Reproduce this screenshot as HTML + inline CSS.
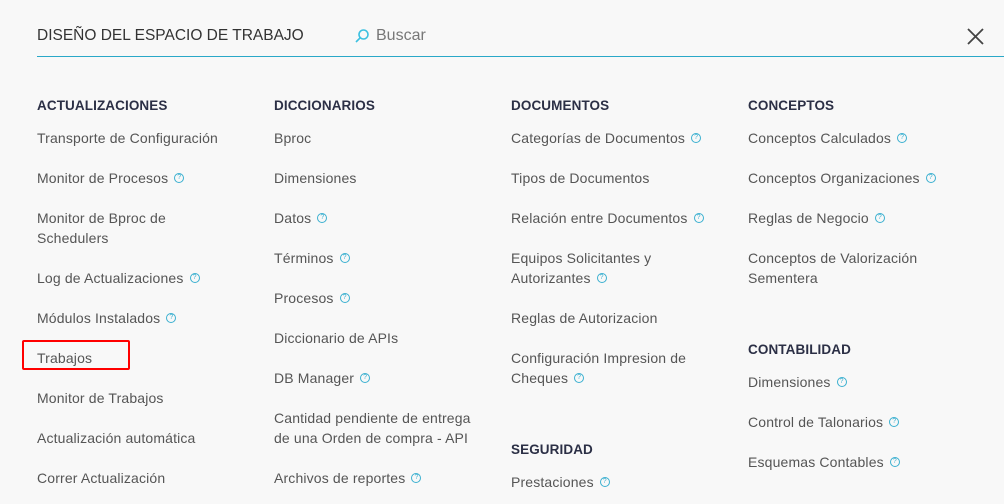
<!DOCTYPE html>
<html><head><meta charset="utf-8"><style>
body{margin:0;width:1004px;height:504px;background:#f8f8f8;position:relative;overflow:hidden;font-family:"Liberation Sans",sans-serif;}
.t{position:absolute;font-size:14px;line-height:20px;color:#555;white-space:nowrap;letter-spacing:0.15px}
.h{position:absolute;font-size:13.5px;line-height:20px;color:#2b2f45;font-weight:bold;white-space:nowrap;letter-spacing:0.1px}
.q{display:inline-block;box-sizing:border-box;width:10px;height:10px;border:1.2px solid #3bb0d0;border-radius:50%;color:#3bb0d0;font-size:7px;line-height:8px;text-align:center;margin-left:6px;vertical-align:middle;position:relative;top:-1px;letter-spacing:0}
</style></head><body>
<div style="position:absolute;left:37px;top:26px;font-size:15.5px;line-height:20px;color:#333;">DISEÑO DEL ESPACIO DE TRABAJO</div>
<svg style="position:absolute;left:354px;top:28px" width="16" height="16" viewBox="0 0 16 16"><circle cx="9.5" cy="6.5" r="4.5" fill="none" stroke="#3bc0e0" stroke-width="1.6"/><line x1="6.3" y1="9.7" x2="2" y2="14" stroke="#3bc0e0" stroke-width="1.6"/></svg>
<div style="position:absolute;left:376px;top:26px;font-size:16px;line-height:20px;color:#777">Buscar</div>
<svg style="position:absolute;left:967px;top:28px" width="17" height="17" viewBox="0 0 17 17"><path d="M1 1L16 16M16 1L1 16" stroke="#444" stroke-width="1.8"/></svg>
<div style="position:absolute;left:37px;top:56px;width:967px;height:1px;background:#2aa8c8"></div>

<div class="h" style="left:37px;top:96px">ACTUALIZACIONES</div>
<div class="t" style="left:37px;top:128px">Transporte de Configuración</div>
<div class="t" style="left:37px;top:168px">Monitor de Procesos<span class="q">?</span></div>
<div class="t" style="left:37px;top:208px">Monitor de Bproc de<br>Schedulers</div>
<div class="t" style="left:37px;top:268px">Log de Actualizaciones<span class="q">?</span></div>
<div class="t" style="left:37px;top:308px">Módulos Instalados<span class="q">?</span></div>
<div class="t" style="left:37px;top:348px">Trabajos</div>
<div style="position:absolute;left:22px;top:340px;width:104px;height:26px;border:2px solid #f00;border-radius:2px"></div>
<div class="t" style="left:37px;top:388px">Monitor de Trabajos</div>
<div class="t" style="left:37px;top:428px">Actualización automática</div>
<div class="t" style="left:37px;top:468px">Correr Actualización</div>

<div class="h" style="left:274px;top:96px">DICCIONARIOS</div>
<div class="t" style="left:274px;top:128px">Bproc</div>
<div class="t" style="left:274px;top:168px">Dimensiones</div>
<div class="t" style="left:274px;top:208px">Datos<span class="q">?</span></div>
<div class="t" style="left:274px;top:248px">Términos<span class="q">?</span></div>
<div class="t" style="left:274px;top:288px">Procesos<span class="q">?</span></div>
<div class="t" style="left:274px;top:328px">Diccionario de APIs</div>
<div class="t" style="left:274px;top:368px">DB Manager<span class="q">?</span></div>
<div class="t" style="left:274px;top:408px">Cantidad pendiente de entrega<br>de una Orden de compra - API</div>
<div class="t" style="left:274px;top:468px">Archivos de reportes<span class="q">?</span></div>

<div class="h" style="left:511px;top:96px">DOCUMENTOS</div>
<div class="t" style="left:511px;top:128px">Categorías de Documentos<span class="q">?</span></div>
<div class="t" style="left:511px;top:168px">Tipos de Documentos</div>
<div class="t" style="left:511px;top:208px">Relación entre Documentos<span class="q">?</span></div>
<div class="t" style="left:511px;top:248px">Equipos Solicitantes y<br>Autorizantes<span class="q">?</span></div>
<div class="t" style="left:511px;top:308px">Reglas de Autorizacion</div>
<div class="t" style="left:511px;top:348px">Configuración Impresion de<br>Cheques<span class="q">?</span></div>
<div class="h" style="left:511px;top:440px">SEGURIDAD</div>
<div class="t" style="left:511px;top:472px">Prestaciones<span class="q">?</span></div>

<div class="h" style="left:748px;top:96px">CONCEPTOS</div>
<div class="t" style="left:748px;top:128px">Conceptos Calculados<span class="q">?</span></div>
<div class="t" style="left:748px;top:168px">Conceptos Organizaciones<span class="q">?</span></div>
<div class="t" style="left:748px;top:208px">Reglas de Negocio<span class="q">?</span></div>
<div class="t" style="left:748px;top:248px">Conceptos de Valorización<br>Sementera</div>
<div class="h" style="left:748px;top:340px">CONTABILIDAD</div>
<div class="t" style="left:748px;top:372px">Dimensiones<span class="q">?</span></div>
<div class="t" style="left:748px;top:412px">Control de Talonarios<span class="q">?</span></div>
<div class="t" style="left:748px;top:452px">Esquemas Contables<span class="q">?</span></div>
</body></html>
